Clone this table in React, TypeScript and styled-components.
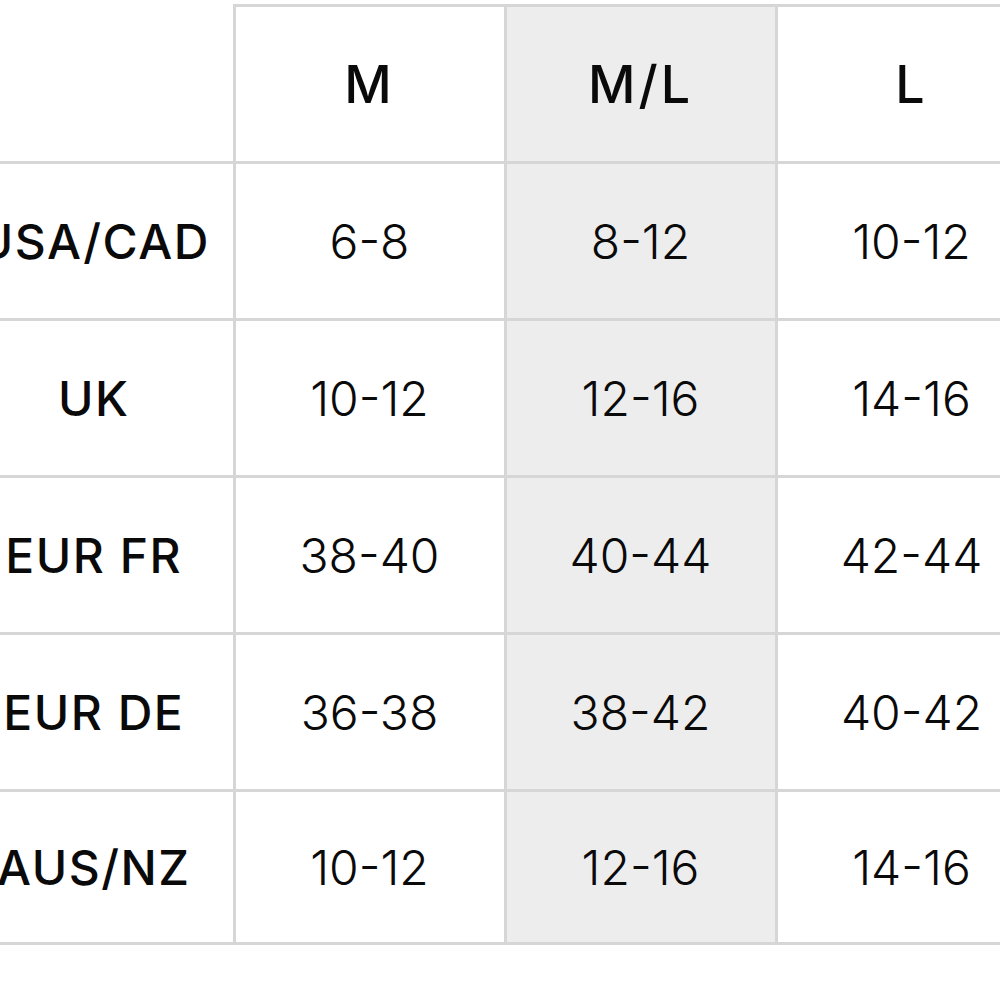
import React from "react";
import styled, { createGlobalStyle } from "styled-components";

const GlobalStyle = createGlobalStyle`
  html, body {
    margin: 0;
    padding: 0;
    background: #ffffff;
    overflow: hidden;
  }
`;

const sizes = ["M", "M/L", "L"];

const rows = [
  { label: "USA/CAD", values: ["6-8", "8-12", "10-12"] },
  { label: "UK", values: ["10-12", "12-16", "14-16"] },
  { label: "EUR FR", values: ["38-40", "40-44", "42-44"] },
  { label: "EUR DE", values: ["36-38", "38-42", "40-42"] },
  { label: "AUS/NZ", values: ["10-12", "12-16", "14-16"] },
];

function App() {
  return (
    <>
      <GlobalStyle />
      <Page>
        <Table>
          <colgroup>
            <col style={{ width: 271 }} />
            <col style={{ width: 271 }} />
            <col style={{ width: 271 }} />
            <col style={{ width: 271 }} />
          </colgroup>
          <thead>
            <Row>
              <Corner />
              {sizes.map((s, i) => (
                <HeadCell key={s} $shaded={i === 1}>
                  {s}
                </HeadCell>
              ))}
            </Row>
          </thead>
          <tbody>
            {rows.map((r, ri) => (
              <Row key={r.label} $last={ri === rows.length - 1}>
                <LabelCell>{r.label}</LabelCell>
                {r.values.map((v, i) => (
                  <ValueCell key={i} $shaded={i === 1}>
                    {v}
                  </ValueCell>
                ))}
              </Row>
            ))}
          </tbody>
        </Table>
      </Page>
    </>
  );
}

const Page = styled.div`
  width: 1000px;
  height: 1000px;
  padding-top: 4px;
  box-sizing: border-box;
  overflow: hidden;
`;

const Table = styled.table`
  border-collapse: collapse;
  table-layout: fixed;
  width: 1084px;
  margin-left: -37px;
`;

const Row = styled.tr<{ $last?: boolean }>`
  height: ${(p) => (p.$last ? "153px" : "157px")};
`;

const Cell = styled.td<{ $shaded?: boolean }>`
  border: 3px solid #d6d6d6;
  text-align: center;
  vertical-align: middle;
  padding: 0;
  color: #0a0a0a;
  background: ${(p) => (p.$shaded ? "#ededed" : "#ffffff")};
`;

const Corner = styled.th`
  border: none;
  border-bottom: 3px solid #d6d6d6;
  background: #ffffff;
`;

const HeadCell = styled(Cell).attrs({ as: "th" })`
  font-family: Inter, "Liberation Sans", sans-serif;
  font-weight: 500;
  font-size: 52px;
  letter-spacing: 3px;
`;

const LabelCell = styled(Cell)`
  border-left: none;
  padding-right: 8px;
  font-family: Inter, "Liberation Sans", sans-serif;
  font-weight: 500;
  font-size: 48px;
  letter-spacing: 1.5px;
`;

const ValueCell = styled(Cell)`
  font-family: Inter, "Liberation Sans", sans-serif;
  font-weight: 300;
  font-size: 48px;
`;

export default App;
